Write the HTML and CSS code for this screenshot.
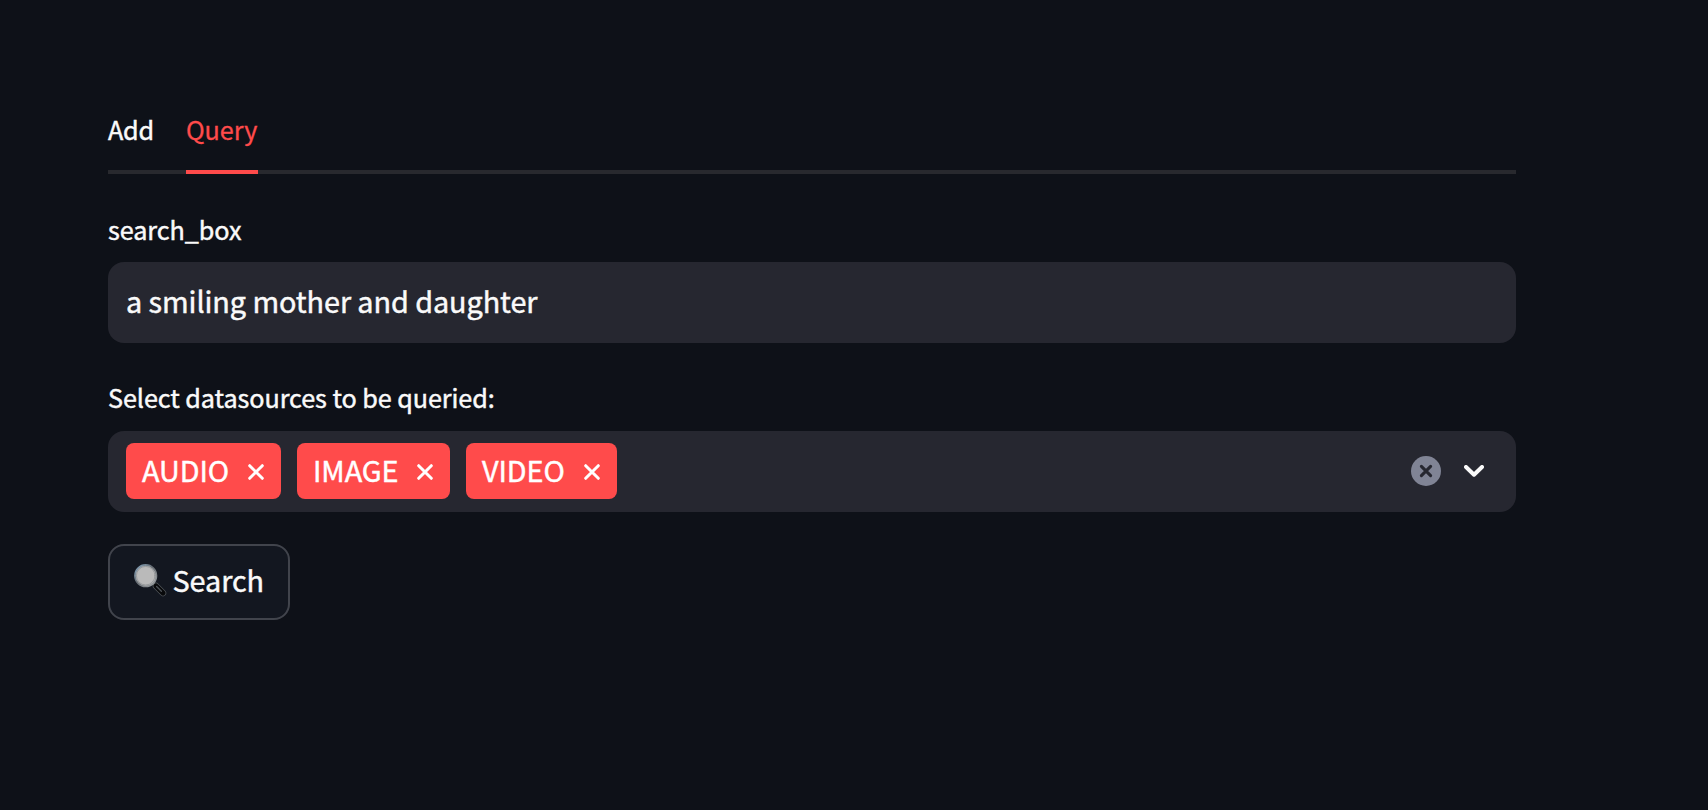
FILE: index.html
```html
<!DOCTYPE html>
<html lang="en">
<head>
<meta charset="utf-8">
<title>Query</title>
<link rel="stylesheet" href="styles.css">
</head>
<body>
<main class="app">
  <nav class="tabs">
    <a class="tab tab-add">Add</a>
    <a class="tab tab-query active">Query</a>
  </nav>
  <label class="label label-search"><span>search_box</span></label>
  <div class="field"><span class="value">a smiling mother and daughter</span></div>
  <label class="label label-sources"><span>Select datasources to be queried:</span></label>
  <div class="field select">
    <div class="tags">
      <span class="tag tag-audio"><span>AUDIO</span><svg class="remove" viewBox="0 0 16 16"><path d="M1.7 1.7 14.3 14.3M14.3 1.7 1.7 14.3"/></svg></span>
      <span class="tag tag-image"><span>IMAGE</span><svg class="remove" viewBox="0 0 16 16"><path d="M1.7 1.7 14.3 14.3M14.3 1.7 1.7 14.3"/></svg></span>
      <span class="tag tag-video"><span>VIDEO</span><svg class="remove" viewBox="0 0 16 16"><path d="M1.7 1.7 14.3 14.3M14.3 1.7 1.7 14.3"/></svg></span>
    </div>
    <svg class="clear" viewBox="0 0 30 30"><circle cx="15" cy="15" r="15"/><path d="M10.4 10.4 19.6 19.6M19.6 10.4 10.4 19.6"/></svg>
    <svg class="chevron" viewBox="0 0 20 12"><path d="M2 2 10 9.7 18 2"/></svg>
  </div>
  <button class="search">
    <svg class="glass" viewBox="0 0 33 33">
      <defs>
        <linearGradient id="rim" x1="0" y1="0" x2="1" y2="1"><stop offset="0" stop-color="#86a6bf"/><stop offset=".45" stop-color="#666c72"/><stop offset="1" stop-color="#a0a4a6"/></linearGradient>
      </defs>
      <path d="M18.6 18.8 22 22.2" stroke="#8b9093" stroke-width="3"/>
      <path d="M22 22 29 29" stroke="#55595d" stroke-width="6.4"/>
      <path d="M22 22 29 29" stroke="#08090b" stroke-width="5.2"/>
      <path d="M22.6 22.4 27.4 27.2" stroke="#4b5055" stroke-width="1.4"/>
      <circle cx="11.7" cy="11.7" r="10.8" fill="#b5b6b7" stroke="url(#rim)" stroke-width="1.6"/>
      <circle cx="11.7" cy="11.7" r="9.3" fill="#bababa" stroke="#8b8e90" stroke-width=".7"/>
    </svg>
    <span>Search</span>
  </button>
</main>
</body>
</html>
```
FILE: styles.css
```css
* { box-sizing: border-box; }
body {
  margin: 0;
  height: 810px;
  overflow: hidden;
  background: #0e1118;
  color: #fafafa;
  font-family: "Noto Sans CJK SC", "Noto Sans", sans-serif;
  letter-spacing: -0.07px;
  -webkit-text-stroke: 0.45px currentColor;
}
svg { display: block; flex: none; fill: none; stroke-linecap: round; stroke-linejoin: round; }
.app {
  display: flex;
  flex-direction: column;
  width: 1408px;
  margin-left: 108px;
  padding-top: 94px;
}
.tabs {
  display: flex;
  gap: 32px;
  height: 80px;
  box-shadow: inset 0 -4px #28292e;
  font-size: 25.2px;
  line-height: 70px;
}
.tab { height: 80px; white-space: nowrap; }
.tab-add { width: 46px; letter-spacing: -0.2px; }
.tab-query { width: 72px; -webkit-text-stroke-width: 0.3px; }
.active { color: #ff4b4b; border-bottom: 4px solid #ff4b4b; }
.label { font-size: 25.2px; line-height: 42px; height: 42px; white-space: nowrap; }
.label-search { margin: 34px 0 12px; }
.label-sources { margin: 33px 0 13px; }
.field {
  display: flex;
  align-items: center;
  height: 81px;
  padding: 0 18px;
  border-radius: 16px;
  background: #262730;
}
.select { padding-bottom: 1px; }
.value { font-size: 28.8px; line-height: 48px; padding-bottom: 4px; white-space: nowrap; }
.tags { display: flex; gap: 16px; flex: 1; }
.tag {
  display: flex;
  align-items: center;
  justify-content: space-between;
  height: 56px;
  padding: 0 17.5px 0 16px;
  border-radius: 8px;
  background: #ff4b4b;
  color: #fff;
  font-size: 28.8px;
  line-height: 52px;
  white-space: nowrap;
}
.tag-audio { width: 155px; }
.tag-image { width: 153px; }
.tag-video { width: 151px; }
.tag > span { padding-bottom: 2px; }
.remove { width: 16px; height: 16px; margin-top: 1px; stroke: #fff; stroke-width: 3; }
.clear { width: 30px; height: 30px; }
.clear circle { fill: #808495; }
.clear path { stroke: #262730; stroke-width: 3.1; }
.chevron { width: 20px; height: 12px; margin: 0 14px 0 23px; stroke: #fafafa; stroke-width: 4; }
.search {
  display: flex;
  align-items: center;
  width: 182px;
  height: 76px;
  margin-top: 32px;
  padding: 0 0 0 24px;
  border: 2px solid #41444c;
  border-radius: 16px;
  background: #131720;
  color: #fafafa;
  font: 28.8px/48px "Noto Sans CJK SC", "Noto Sans", sans-serif;
  letter-spacing: -0.06px;
  white-space: nowrap;
}
.search span { margin-left: 5.5px; padding-bottom: 5px; }
.glass { width: 33px; height: 33px; margin-bottom: 3px; }
```
